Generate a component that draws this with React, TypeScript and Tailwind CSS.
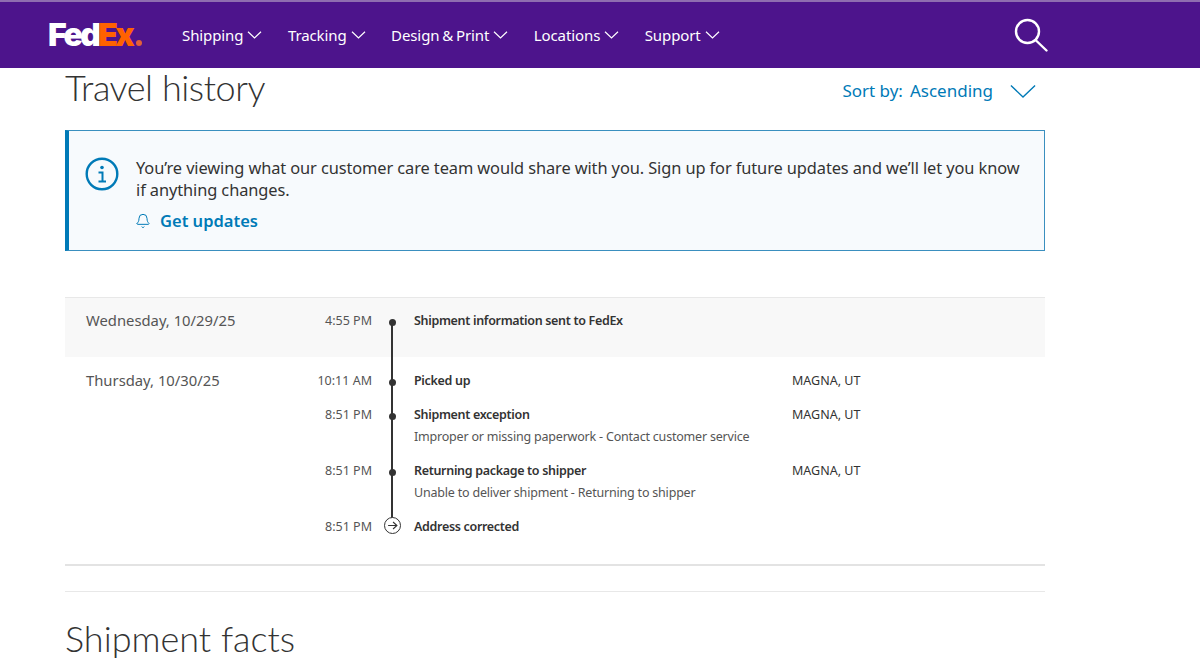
import { Bell } from 'lucide-react'

const navItems = ['Shipping', 'Tracking', 'Design & Print', 'Locations', 'Support']

interface Scan {
  time: string
  title: string
  detail?: string
  place?: string
  last?: boolean
}

const thursday: Scan[] = [
  { time: '10:11 AM', title: 'Picked up', place: 'MAGNA, UT' },
  {
    time: '8:51 PM',
    title: 'Shipment exception',
    detail: 'Improper or missing paperwork - Contact customer service',
    place: 'MAGNA, UT',
  },
  {
    time: '8:51 PM',
    title: 'Returning package to shipper',
    detail: 'Unable to deliver shipment - Returning to shipper',
    place: 'MAGNA, UT',
  },
  { time: '8:51 PM', title: 'Address corrected', last: true },
]

function Caret({ className, stroke = 1.2 }: { className: string; stroke?: number }) {
  return (
    <svg viewBox="0 0 14 8" fill="none" stroke="currentColor" strokeWidth={stroke} className={className}>
      <path d="M0.5 0.8 7 7 13.5 0.8" />
    </svg>
  )
}

function Logo() {
  return (
    <div className="flex items-baseline font-['Inter',sans-serif] text-[32px] leading-none font-black tracking-[-2.6px]">
      <span className="text-white">Fed</span>
      <span className="text-[#ff6200]">Ex</span>
      <span className="ml-[4px] size-[6px] rounded-full bg-[#e2603a]" />
    </div>
  )
}

function Header() {
  return (
    <header className="flex h-[68px] shrink-0 items-center border-t-2 border-[#8f6db0] bg-[#4d148c] pl-[48px] text-white">
      <div className="w-[134px]">
        <Logo />
      </div>
      <nav className="flex gap-[25.5px]">
        {navItems.map((item) => (
          <div key={item} className="flex items-center gap-[4px] text-[15px] leading-none tracking-[-0.1px] [word-spacing:-1px]">
            {item}
            <Caret className="h-[8px] w-[15px]" />
          </div>
        ))}
      </nav>
      <svg viewBox="0 0 34 34" fill="none" stroke="currentColor" strokeWidth="2.4" className="ml-[294px] size-[34px]">
        <circle cx="13.5" cy="13.5" r="11.5" />
        <path d="M21.5 22 32.5 32.5" strokeLinecap="round" />
      </svg>
    </header>
  )
}

function Notice() {
  return (
    <div className="mt-[24px] flex h-[121px] border border-l-4 border-[#3a8fbf] border-l-[#007ab7] bg-[#f7fafd] pt-[27px] pl-[16px]">
      <svg viewBox="0 0 34 34" fill="none" stroke="#007ab7" strokeWidth="2.4" className="mt-[-1px] size-[34px] shrink-0">
        <circle cx="17" cy="17" r="15.3" />
        <path d="M13.5 15.5H17.5V24M13.5 24.5H21" strokeWidth="2" />
        <circle cx="17" cy="10.5" r="1.8" fill="#007ab7" stroke="none" />
      </svg>
      <div className="mt-[-1px] ml-[17px] w-[895px] text-[#333]">
        <p className="text-[16.4px] leading-[22px] tracking-[-0.1px]">
          You’re viewing what our customer care team would share with you. Sign up for future updates and we’ll let you know if anything changes.
        </p>
        <a className="mt-[9px] flex items-center text-[16.5px] leading-[22px] font-semibold text-[#007ab7]">
          <Bell className="mr-[9px] -ml-[1px] size-[16px]" strokeWidth={1.5} />
          Get updates
        </a>
      </div>
    </div>
  )
}

function Row({ date, scan }: { date?: string; scan: Scan }) {
  return (
    <div className="grid grid-cols-[215px_92px_42px_378px_1fr] text-[12.5px] leading-[22px] text-[#333]">
      <div className="pl-[21px] text-[14.8px] leading-[20px] text-[#555]">{date}</div>
      <div className="text-right text-[#555]">{scan.time}</div>
      <div className="flex justify-center pr-[2px]">
        {scan.last ? (
          <span className="relative mt-[1px] flex size-[17px] items-center justify-center rounded-full border border-[#333] bg-white">
            <svg viewBox="0 0 10 10" fill="none" stroke="#333" strokeWidth="1" className="size-[11px]">
              <path d="M1 5H9M5.5 1.8 9 5 5.5 8.2" />
            </svg>
          </span>
        ) : (
          <span className="relative mt-[9px] size-[7px] rounded-full bg-[#333]" />
        )}
      </div>
      <div>
        <div className="font-semibold tracking-[-0.32px]">{scan.title}</div>
        {scan.detail && <div className="tracking-[-0.2px] text-[#555]">{scan.detail}</div>}
      </div>
      <div className="text-[#333]">{scan.place}</div>
    </div>
  )
}

function Timeline() {
  return (
    <div className="relative mt-[46px] border-t border-[#e8e8e8]">
      {/* connects the scan dots */}
      <span className="absolute top-[24px] left-[326px] h-[198px] w-[2px] bg-[#333]" />
      <div className="h-[59px] bg-[#f8f8f8] pt-[12px]">
        <Row
          date="Wednesday, 10/29/25"
          scan={{ time: '4:55 PM', title: 'Shipment information sent to FedEx' }}
        />
      </div>
      <div className="flex flex-col gap-[12px] pt-[13px]">
        {thursday.map((scan, i) => (
          <Row key={i} date={i === 0 ? 'Thursday, 10/30/25' : undefined} scan={scan} />
        ))}
      </div>
    </div>
  )
}

export default function App() {
  return (
    <div className="flex h-[666px] w-[1200px] flex-col overflow-hidden bg-white font-['Noto_Sans',sans-serif]">
      <Header />
      <main className="w-[1045px] pl-[65px]">
        <div className="flex items-start justify-between">
          <h1 className="font-['Lato',sans-serif] text-[36px] leading-[38px] font-light tracking-[-0.45px] text-[#333]">Travel history</h1>
          <div className="mt-[11px] flex items-center pr-[9px] text-[17px] leading-[24px] text-[#007ab7]">
            <span>Sort by:</span>
            <span className="ml-[7px]">Ascending</span>
            <Caret className="ml-[17px] h-[15px] w-[26px]" stroke={0.75} />
          </div>
        </div>
        <Notice />
        <Timeline />
        <div className="mt-[26px] border-t-2 border-[#e3e3e3]" />
        <div className="mt-[25px] border-t border-[#e8e8e8]" />
        <h2 className="mt-[26px] font-['Lato',sans-serif] text-[36px] leading-[41px] font-light text-[#333]">Shipment facts</h2>
      </main>
    </div>
  )
}
